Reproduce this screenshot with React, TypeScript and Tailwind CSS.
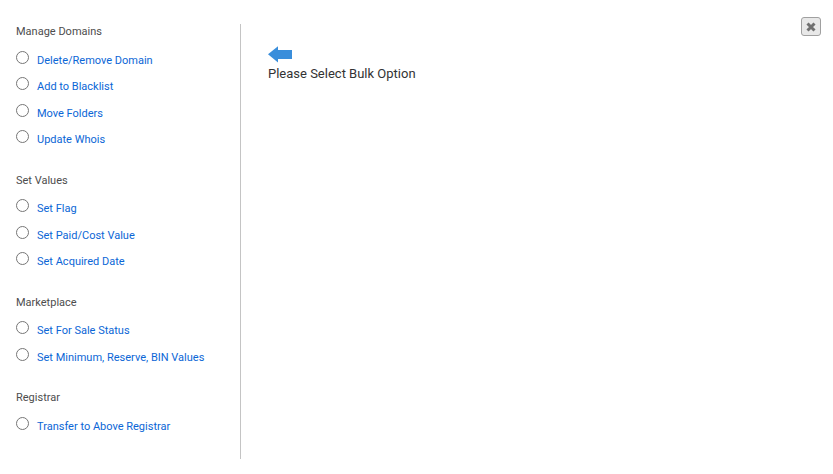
const sections = [
  { title: "Manage Domains", options: ["Delete/Remove Domain", "Add to Blacklist", "Move Folders", "Update Whois"] },
  { title: "Set Values", options: ["Set Flag", "Set Paid/Cost Value", "Set Acquired Date"] },
  { title: "Marketplace", options: ["Set For Sale Status", "Set Minimum, Reserve, BIN Values"] },
  { title: "Registrar", options: ["Transfer to Above Registrar"] },
];

function OptionRow({ label }: { label: string }) {
  return (
    <div className="flex h-[26.4px] items-start">
      <span className="mt-[1px] h-[13px] w-[13px] rounded-full border border-[#767676] bg-white" />
      <a href="#" className="ml-[8px] mt-[3px] text-[11px] leading-[16px] text-[#0b66d6]">
        {label}
      </a>
    </div>
  );
}

export default function App() {
  return (
    <div className="relative h-[474px] w-[833px] overflow-hidden bg-white font-['Roboto',sans-serif]">
      <div className="flex pt-[24px]">
        <div className="h-[435px] w-[241px] border-r border-[#c4c4c4] pl-[16px]">
          {sections.map((section) => (
            <div key={section.title} className="mb-[17.18px]">
              <h3 className="mb-[10.8px] text-[11px] leading-[15px] font-normal text-[#4d4d4d]">{section.title}</h3>
              {section.options.map((option) => (
                <OptionRow key={option} label={option} />
              ))}
            </div>
          ))}
        </div>
        <div className="pl-[27px] pt-[22px]">
          <svg width="24" height="17" viewBox="0 0 24 17" className="block">
            <path d="M0 8.3 L10 0.3 V4 H24 V13 H10 V16.5 Z" fill="#3a8edb" />
          </svg>
          <p className="mt-[2px] text-[13px] leading-[18px] text-[#333]">Please Select Bulk Option</p>
        </div>
      </div>
      <button className="absolute left-[801px] top-[17px] flex h-[19px] w-[20px] items-center justify-center rounded-[3px] border border-[#a0a0a0] bg-[#e8e8e8]">
        <svg width="12" height="12" viewBox="0 0 12 12">
          <path d="M2.5 2.5 L9.5 9.5 M9.5 2.5 L2.5 9.5" stroke="#707070" strokeWidth="3" strokeLinecap="butt" />
        </svg>
      </button>
    </div>
  );
}
